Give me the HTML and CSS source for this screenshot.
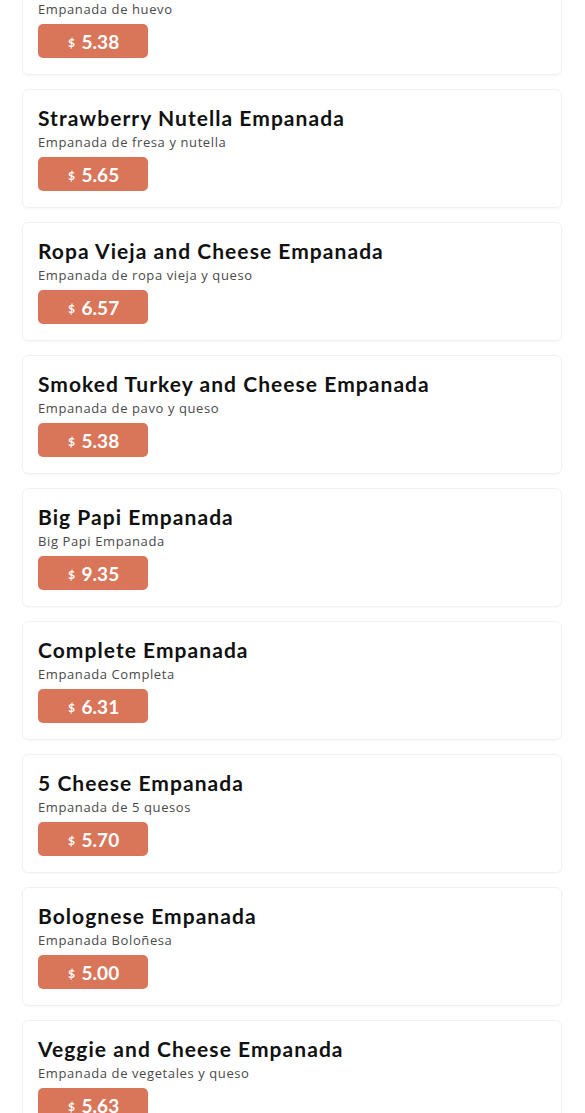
FILE: index.html
```html
<!DOCTYPE html>
<html lang="en">
<head>
    <meta charset="UTF-8">
    <meta name="viewport" content="width=device-width, initial-scale=1.0">
    <title>Empanadas</title>
    <link rel="stylesheet" href="styles.css">
</head>
<body>
    <div class="menu-list">
        <div class="menu-item">
            <h3 class="item-name">Egg Empanada</h3>
            <p class="item-desc">Empanada de huevo</p>
            <div class="price"><span class="currency">$</span> 5.38</div>
        </div>
        <div class="menu-item">
            <h3 class="item-name">Strawberry Nutella Empanada</h3>
            <p class="item-desc">Empanada de fresa y nutella</p>
            <div class="price"><span class="currency">$</span> 5.65</div>
        </div>
        <div class="menu-item">
            <h3 class="item-name">Ropa Vieja and Cheese Empanada</h3>
            <p class="item-desc">Empanada de ropa vieja y queso</p>
            <div class="price"><span class="currency">$</span> 6.57</div>
        </div>
        <div class="menu-item">
            <h3 class="item-name">Smoked Turkey and Cheese Empanada</h3>
            <p class="item-desc">Empanada de pavo y queso</p>
            <div class="price"><span class="currency">$</span> 5.38</div>
        </div>
        <div class="menu-item">
            <h3 class="item-name">Big Papi Empanada</h3>
            <p class="item-desc">Big Papi Empanada</p>
            <div class="price"><span class="currency">$</span> 9.35</div>
        </div>
        <div class="menu-item">
            <h3 class="item-name">Complete Empanada</h3>
            <p class="item-desc">Empanada Completa</p>
            <div class="price"><span class="currency">$</span> 6.31</div>
        </div>
        <div class="menu-item">
            <h3 class="item-name">5 Cheese Empanada</h3>
            <p class="item-desc">Empanada de 5 quesos</p>
            <div class="price"><span class="currency">$</span> 5.70</div>
        </div>
        <div class="menu-item">
            <h3 class="item-name">Bolognese Empanada</h3>
            <p class="item-desc">Empanada Boloñesa</p>
            <div class="price"><span class="currency">$</span> 5.00</div>
        </div>
        <div class="menu-item">
            <h3 class="item-name">Veggie and Cheese Empanada</h3>
            <p class="item-desc">Empanada de vegetales y queso</p>
            <div class="price"><span class="currency">$</span> 5.63</div>
        </div>
    </div>
</body>
</html>
```

FILE: styles.css
```css
body {
    margin: 0;
    padding: 0;
    background-color: #ffffff;
    font-family: "Lato", "Open Sans", sans-serif;
    overflow: hidden;
}

.menu-list {
    display: flex;
    flex-direction: column;
    gap: 14px;
    margin: -44px 23px 0 22px;
}

.menu-item {
    display: flex;
    flex-direction: column;
    align-items: flex-start;
    height: 119px;
    box-sizing: border-box;
    padding: 16px 15px 16px 15px;
    border: 1px solid #f1f1f1;
    border-radius: 6px;
    box-shadow: 0 1px 2px rgba(0, 0, 0, 0.03);
}

.item-name {
    margin: 0;
    font-size: 21px;
    line-height: 24px;
    font-weight: 700;
    letter-spacing: 1.05px;
    color: #111;
}

.item-desc {
    margin: 2px 0 0;
    font-family: "Open Sans", sans-serif;
    font-size: 13px;
    line-height: 20px;
    letter-spacing: 0.6px;
    color: #4a4a4a;
}

.price {
    margin-top: 5px;
    height: 36px;
    padding: 0 29px 0 30px;
    display: flex;
    align-items: center;
    gap: 2px;
    background-color: #d9765a;
    border-radius: 5px;
    color: #fff;
    font-size: 19px;
    font-weight: 700;
    white-space: pre;
}

.currency {
    font-size: 12px;
    margin-top: 3px;
}
```
